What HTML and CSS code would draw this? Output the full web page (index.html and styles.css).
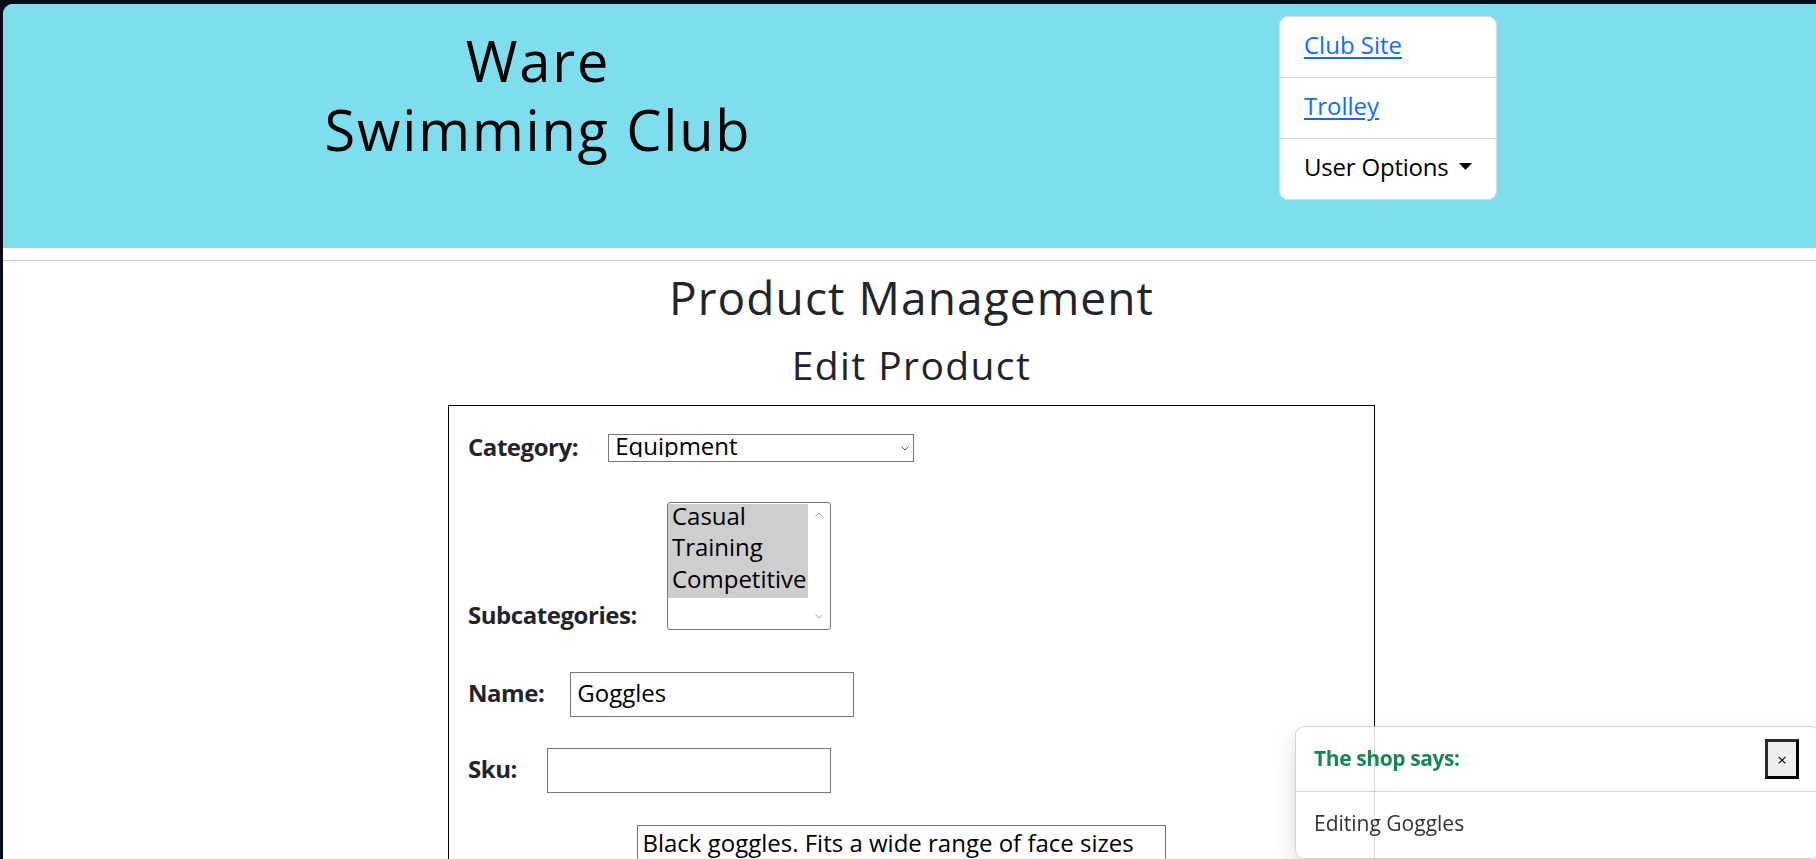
FILE: index.html
```html
<!DOCTYPE html>
<html lang="en">
<head>
<meta charset="utf-8">
<title>Ware Swimming Club - Edit Product</title>
<link rel="stylesheet" href="styles.css">
</head>
<body>
<div class="window">
  <header class="site-header">
    <div class="brand">
      <h1 class="brand-title">Ware<br>Swimming Club</h1>
    </div>
    <nav class="nav-card">
      <div class="nav-item"><a class="nav-link" href="#">Club Site</a></div>
      <div class="nav-item"><a class="nav-link" href="#">Trolley</a></div>
      <div class="nav-item nav-dropdown">User Options<svg class="caret" width="13" height="7" viewBox="0 0 13 7"><path d="M0 0H13L6.5 7Z" fill="#000"/></svg></div>
    </nav>
  </header>
  <div class="divider"></div>
  <main class="content">
    <h1 class="page-title">Product Management</h1>
    <h2 class="page-subtitle">Edit Product</h2>
    <form class="product-form">
      <div class="field field-category">
        <label class="field-label" for="category">Category:</label>
        <div class="select-wrap">
          <select class="select" id="category">
            <option>Equipment</option>
            <option>Clothing</option>
          </select>
          <svg class="select-chevron" width="8" height="5" viewBox="0 0 8 5"><path d="M0.5 0.5L4 4L7.5 0.5" fill="none" stroke="#555" stroke-width="1"/></svg>
        </div>
      </div>
      <div class="field field-bottom field-subcat">
        <label class="field-label label-bottom">Subcategories:</label>
        <div class="listbox" role="listbox" aria-multiselectable="true">
          <div class="listbox-options">
            <div class="listbox-option" role="option" aria-selected="true">Casual</div>
            <div class="listbox-option" role="option" aria-selected="true">Training</div>
            <div class="listbox-option" role="option" aria-selected="true">Competitive</div>
          </div>
          <div class="listbox-scroll">
            <svg width="8" height="5" viewBox="0 0 8 5"><path d="M0.5 4.5L4 1L7.5 4.5" fill="none" stroke="#a3a3a3" stroke-width="1"/></svg>
            <svg width="8" height="5" viewBox="0 0 8 5"><path d="M0.5 0.5L4 4L7.5 0.5" fill="none" stroke="#a3a3a3" stroke-width="1"/></svg>
          </div>
        </div>
      </div>
      <div class="field field-name">
        <label class="field-label" for="name">Name:</label>
        <input class="text-input" id="name" type="text" value="Goggles">
      </div>
      <div class="field field-sku">
        <label class="field-label" for="sku">Sku:</label>
        <input class="text-input" id="sku" type="text" value="">
      </div>
      <div class="field field-bottom">
        <label class="field-label label-bottom" for="desc">Description:</label>
        <textarea class="textarea" id="desc">Black goggles. Fits a wide range of face sizes</textarea>
      </div>
    </form>
  </main>
</div>
<div class="toast">
  <div class="toast-header">
    <strong class="toast-title">The shop says:</strong>
    <button class="toast-close" type="button">×</button>
  </div>
  <div class="toast-body">Editing Goggles</div>
</div>
</body>
</html>
```
FILE: styles.css
```css
html, body {
  margin: 0;
  padding: 0;
  height: 100%;
  overflow: hidden;
}
body {
  background: #060b19;
  font-family: "Open Sans", "Noto Sans", sans-serif;
  color: #212529;
}
.window {
  margin: 4px 0 0 3px;
  height: calc(100vh - 4px);
  background: #fff;
  border-top-left-radius: 10px;
  overflow: hidden;
}

/* header */
.site-header {
  height: 244px;
  background: #7fdeee;
  display: flex;
  align-items: flex-start;
}
.brand {
  width: 1070px;
  padding-top: 22px;
  text-align: center;
}
.brand-title {
  margin: 0;
  font-size: 56px;
  line-height: 69px;
  font-weight: 400;
  letter-spacing: 1.8px;
  color: #000;
}
.nav-card {
  margin: 12px 0 0 206px;
  width: 218px;
  box-sizing: border-box;
  background: #fff;
  border: 1px solid #dcdcdc;
  border-radius: 9px;
  display: flex;
  flex-direction: column;
}
.nav-item {
  height: 61px;
  box-sizing: border-box;
  padding: 10px 24px 14px;
  font-size: 24px;
  line-height: 36px;
  border-top: 1px solid #dcdcdc;
  white-space: nowrap;
}
.nav-item:first-child {
  border-top: none;
  height: 60px;
}
.nav-link {
  color: #0d6efd;
  text-decoration: underline;
  text-underline-offset: 3px;
}
.nav-dropdown {
  color: #000;
  letter-spacing: -0.2px;
}
.caret {
  margin-left: 10px;
  vertical-align: 6px;
}

.divider {
  margin-top: 12px;
  height: 1px;
  background: #c8c8c8;
}

/* content */
.content {
  display: flex;
  flex-direction: column;
  align-items: center;
  padding-left: 4px;
}
.page-title {
  margin: 9px 0 0;
  font-size: 46px;
  line-height: 55px;
  font-weight: 400;
  letter-spacing: 1.1px;
  color: #212529;
}
.page-subtitle {
  margin: 16px 0 0;
  font-size: 39px;
  line-height: 47px;
  font-weight: 400;
  letter-spacing: 1.4px;
  color: #212529;
}
.product-form {
  margin: 17px 0 0;
  width: 927px;
  box-sizing: border-box;
  border: 1px solid #000;
  padding: 28px 19px 40px;
  display: flex;
  flex-direction: column;
}
.field {
  display: flex;
  align-items: center;
  gap: 30px;
}
.field-bottom {
  align-items: flex-end;
}
.field-category { margin-bottom: 40px; }
.field-subcat { margin-bottom: 42px; }
.field-name { margin-bottom: 31px; gap: 26px; }
.field-sku { margin-bottom: 32px; }

.field-label {
  font-size: 24px;
  line-height: 24px;
  font-weight: 700;
  letter-spacing: -0.45px;
  color: #212529;
  margin-bottom: 3px;
}
.label-bottom {
  margin-bottom: 3px;
}

.select-wrap {
  position: relative;
  display: flex;
}
.select {
  display: block;
  appearance: none;
  -webkit-appearance: none;
  width: 306px;
  height: 28px;
  box-sizing: border-box;
  border: 1px solid #767676;
  border-radius: 0;
  background: #fff;
  padding: 0 6px 4px;
  margin: 0;
  font-family: inherit;
  font-size: 24px;
  line-height: 22px;
  color: #000;
}
.select-chevron {
  position: absolute;
  right: 5px;
  top: 12px;
  pointer-events: none;
}

.listbox {
  width: 164px;
  height: 128px;
  box-sizing: border-box;
  border: 1px solid #767676;
  border-radius: 3px;
  display: flex;
  background: #fff;
}
.listbox-options {
  width: 140px;
  padding-top: 1px;
}
.listbox-option {
  height: 31.33px;
  box-sizing: border-box;
  padding: 0 0 8px 4px;
  font-size: 24px;
  line-height: 23.33px;
  background: #cecece;
  color: #000;
  white-space: nowrap;
}
.listbox-scroll {
  flex: 1;
  display: flex;
  flex-direction: column;
  justify-content: space-between;
  align-items: center;
  padding: 9px 0 10px;
}

.text-input {
  display: block;
  width: 284px;
  height: 45px;
  box-sizing: border-box;
  border: 1px solid #767676;
  border-radius: 0;
  padding: 0 6px 5px;
  margin: 0;
  font-family: inherit;
  font-size: 24px;
  color: #000;
  background: #fff;
}
.textarea {
  display: block;
  width: 529px;
  height: 100px;
  box-sizing: border-box;
  border: 1px solid #767676;
  border-radius: 0;
  padding: 3px 4px;
  margin: 0;
  font-family: inherit;
  font-size: 24px;
  line-height: 28.8px;
  color: #000;
  resize: vertical;
}

/* toast */
.toast {
  position: fixed;
  left: 1295px;
  top: 726px;
  width: 525px;
  box-sizing: border-box;
  background: rgba(255, 255, 255, 0.85);
  border: 1px solid rgba(0, 0, 0, 0.175);
  border-radius: 9px;
  box-shadow: 0 12px 24px rgba(0, 0, 0, 0.15);
  font-size: 21px;
}
.toast-header {
  display: flex;
  align-items: center;
  justify-content: space-between;
  padding: 12px 18px;
  border-bottom: 1px solid rgba(0, 0, 0, 0.15);
}
.toast-title {
  color: #198754;
  font-weight: 700;
  letter-spacing: -0.4px;
  line-height: 31.5px;
}
.toast-close {
  width: 34px;
  height: 40px;
  margin: 0 2px 0 0;
  padding: 0;
  background: #efefef;
  border: 3px solid;
  border-color: #2a2a2a #000 #000 #2a2a2a;
  font-size: 17px;
  line-height: 1;
  color: #000;
  font-family: inherit;
}
.toast-body {
  padding: 16px 18px 18px;
  line-height: 31.5px;
  color: #333;
}
```
